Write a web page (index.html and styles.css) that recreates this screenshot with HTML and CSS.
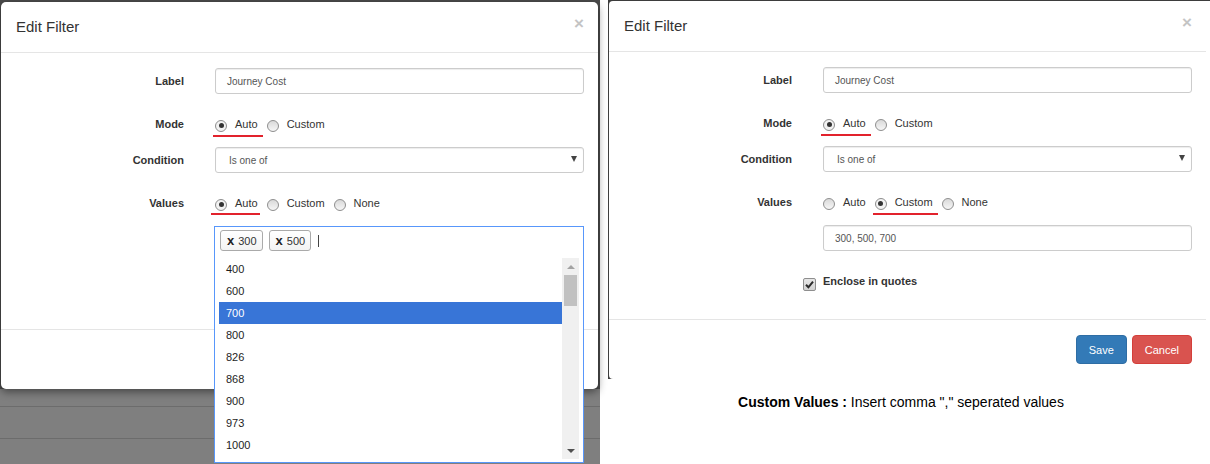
FILE: index.html
```html
<!DOCTYPE html>
<html lang="en">
<head>
<meta charset="UTF-8">
<title>Edit Filter</title>
<link rel="stylesheet" href="styles.css">
</head>
<body>

<div class="page">

    <!-- left shot: values = auto, dropdown open -->
    <div class="shot shot-left">
        <div class="modal">
            <div class="modal-header">
                <h4>Edit Filter</h4>
                <span class="close">&times;</span>
            </div>
            <div class="modal-body">
                <div class="form-row">
                    <label>Label</label>
                    <div class="input">Journey Cost</div>
                </div>
                <div class="form-row radios">
                    <label>Mode</label>
                    <div class="options">
                        <span class="opt marked"><i class="radio checked"></i>Auto</span>
                        <span class="opt"><i class="radio"></i>Custom</span>
                    </div>
                </div>
                <div class="form-row">
                    <label>Condition</label>
                    <div class="select">Is one of <span class="arrow"></span></div>
                </div>
                <div class="form-row radios">
                    <label>Values</label>
                    <div class="options">
                        <span class="opt marked wide"><i class="radio checked"></i>Auto</span>
                        <span class="opt"><i class="radio"></i>Custom</span>
                        <span class="opt"><i class="radio"></i>None</span>
                    </div>
                </div>
                <div class="form-row last">
                    <div class="tagbox offset">
                        <span class="tag"><b>x</b>300</span>
                        <span class="tag"><b>x</b>500</span>
                        <span class="cursor"></span>

                        <div class="results">
                            <ul>
                                <li>400</li>
                                <li>600</li>
                                <li class="hl">700</li>
                                <li>800</li>
                                <li>826</li>
                                <li>868</li>
                                <li>900</li>
                                <li>973</li>
                                <li>1000</li>
                            </ul>
                            <div class="scrollbar">
                                <span class="sb-btn up"></span>
                                <span class="sb-thumb"></span>
                                <span class="sb-track"></span>
                                <span class="sb-btn down"></span>
                            </div>
                        </div>
                    </div>
                </div>
            </div>
            <div class="modal-footer"></div>
        </div>
    </div>

    <!-- right shot: values = custom -->
    <div class="right-col">
        <div class="shot shot-right">
            <div class="modal">
                <div class="modal-header">
                    <h4>Edit Filter</h4>
                    <span class="close">&times;</span>
                </div>
                <div class="modal-body">
                    <div class="form-row">
                        <label>Label</label>
                        <div class="input">Journey Cost</div>
                    </div>
                    <div class="form-row radios">
                        <label>Mode</label>
                        <div class="options">
                            <span class="opt marked"><i class="radio checked"></i>Auto</span>
                            <span class="opt"><i class="radio"></i>Custom</span>
                        </div>
                    </div>
                    <div class="form-row">
                        <label>Condition</label>
                        <div class="select">Is one of <span class="arrow"></span></div>
                    </div>
                    <div class="form-row radios">
                        <label>Values</label>
                        <div class="options">
                            <span class="opt"><i class="radio"></i>Auto</span>
                            <span class="opt marked"><i class="radio checked"></i>Custom</span>
                            <span class="opt"><i class="radio"></i>None</span>
                        </div>
                    </div>
                    <div class="form-row">
                        <div class="input offset">300, 500, 700</div>
                    </div>
                    <div class="form-row radios">
                        <div class="check offset">
                            <span class="checkbox">
                                <svg width="9" height="9" viewBox="0 0 9 9"><path d="M1 4.8 L3.4 7.3 L8 1.6" fill="none" stroke="#2b2b2b" stroke-width="2"/></svg>
                            </span>
                            Enclose in quotes
                        </div>
                    </div>
                </div>
                <div class="modal-footer">
                    <button class="btn btn-primary">Save</button>
                    <button class="btn btn-danger">Cancel</button>
                </div>
            </div>
        </div>
        <p class="caption"><b>Custom Values :</b> Insert comma "," seperated values</p>
    </div>

</div>

</body>
</html>
```

FILE: styles.css
```css
body {
    margin: 0;
    font-family: "Liberation Sans", Arial, sans-serif;
    color: #333;
    background: #fff;
}
.page {
    display: flex;
    width: 1210px;
    height: 464px;
    overflow: hidden;
}

/* screenshots */
.shot-left {
    width: 600px;
    height: 464px;
    box-sizing: border-box;
    padding: 2px 0 0 1px;
    background:
        linear-gradient(#6c6c6c, #6c6c6c) 0 406px / 100% 1px no-repeat,
        linear-gradient(#6c6c6c, #6c6c6c) 0 438px / 100% 1px no-repeat,
        linear-gradient(#4b4b4b 389px, #7f7f7f 389px);
}
.right-col {
    margin-left: 8px;
    width: 602px;
}
.shot-right {
    border-top: 1px solid #3d3d3d;
    border-left: 1px solid #3d3d3d;
    background: linear-gradient(to right, #3d3d3d 6px, #fff 6px);
}

/* modal */
.modal {
    width: 597px;
    background: #fff;
    border-radius: 5px;
    position: relative;
}
.shot-left .modal {
    box-shadow: 0 3px 8px rgba(0, 0, 0, 0.45);
}
.shot-right .modal {
    border-radius: 4px 0 0 4px;
}
.modal-header {
    display: flex;
    justify-content: space-between;
    align-items: flex-start;
    padding: 15px 14px 15px 15px;
    border-bottom: 1px solid #e5e5e5;
}
.modal-header h4 {
    margin: 0;
    font-size: 15px;
    font-weight: normal;
    line-height: 20px;
    color: #333;
}
.close {
    font-size: 17px;
    font-weight: bold;
    line-height: 16px;
    margin-top: -1px;
    color: #c4c4c4;
}
.modal-body {
    padding: 15px 14px 15px 15px;
}
.modal-footer {
    display: flex;
    justify-content: flex-end;
    gap: 5px;
    height: 29px;
    padding: 15px 14px 15px 15px;
    border-top: 1px solid #e5e5e5;
}

/* form */
.form-row {
    display: grid;
    grid-template-columns: 168px 369px;
    column-gap: 31px;
    align-items: center;
    margin-bottom: 13px;
}
.form-row.last {
    margin-bottom: 56px;
}
.form-row label {
    text-align: right;
    font-size: 11px;
    font-weight: bold;
}
.form-row.radios {
    padding-top: 7px;
    line-height: 20px;
}
.offset {
    grid-column: 2;
}
.input,
.select {
    height: 26px;
    box-sizing: border-box;
    border: 1px solid #ccc;
    border-radius: 3px;
    box-shadow: inset 0 1px 1px rgba(0, 0, 0, 0.075);
    font-size: 10px;
    line-height: 25px;
    color: #555;
    padding: 0 11px;
}
.select {
    display: flex;
    justify-content: space-between;
    align-items: center;
    padding: 0 6px 0 13px;
}
.arrow {
    width: 0;
    height: 0;
    border-left: 3.5px solid transparent;
    border-right: 3.5px solid transparent;
    border-top: 6px solid #444;
    margin-top: -2px;
}

/* radios */
.options {
    display: flex;
    font-size: 11px;
}
.opt {
    display: inline-flex;
    align-items: center;
    position: relative;
    margin-right: 9px;
}
.radio {
    width: 12px;
    height: 12px;
    box-sizing: border-box;
    border: 1px solid #8e8e8e;
    border-radius: 50%;
    background: linear-gradient(#d9d9d9, #f6f6f6);
    margin: 3px 8px 0 0;
    position: relative;
}
.radio.checked {
    background: #f2f2f2;
}
.radio.checked::after {
    content: "";
    position: absolute;
    inset: 2.5px;
    border-radius: 50%;
    background: #333;
}
/* red marks drawn under the chosen option */
.opt.marked::after {
    content: "";
    position: absolute;
    left: -2px;
    right: -5px;
    bottom: -3px;
    height: 2px;
    background: #e2222c;
}
.opt.marked.wide::after {
    left: -4px;
    right: -2px;
    bottom: -2px;
}

/* checkbox */
.check {
    display: flex;
    align-items: center;
    font-size: 11px;
    font-weight: bold;
}
.checkbox {
    width: 13px;
    height: 13px;
    box-sizing: border-box;
    border: 1px solid #8e8e8e;
    border-radius: 2px;
    background: linear-gradient(#e6e6e6, #d2d2d2);
    margin: 6px 7px 0 -20px;
    display: flex;
    align-items: center;
    justify-content: center;
}

/* multi select */
.tagbox {
    position: relative;
    z-index: 2;
    display: flex;
    align-items: center;
    height: 31px;
    box-sizing: content-box;
    border: 1px solid #5897fb;
    border-bottom: 0;
    padding: 0 0 0 5px;
    margin-left: -1px;
    align-self: start;
}
.tag {
    display: inline-flex;
    align-items: center;
    height: 21px;
    box-sizing: border-box;
    border: 1px solid #aaa;
    border-radius: 3px;
    padding: 0 5px 0 6px;
    margin: -4px 6px 0 0;
    font-size: 11px;
    color: #333;
    background: linear-gradient(#fff, #f3f3f3);
}
.tag b {
    font-size: 13px;
    margin-right: 4px;
    color: #222;
}
.cursor {
    width: 1px;
    height: 12px;
    background: #444;
    margin: -4px 0 0 1px;
}
.results {
    position: absolute;
    top: 100%;
    left: -1px;
    right: -1px;
    display: flex;
    height: 201px;
    padding: 0 4px 3px 4px;
    background: #fff;
    border: 1px solid #5897fb;
    border-top: 0;
}
.results ul {
    flex: 1;
    margin: 0;
    padding: 0;
    list-style: none;
    overflow: hidden;
}
.results li {
    padding: 3px 7px;
    line-height: 16px;
    font-size: 11px;
    color: #1d1d1d;
}
.results li.hl {
    background: #3875d7;
    color: #fff;
}
.scrollbar {
    width: 17px;
    display: flex;
    flex-direction: column;
    align-items: center;
    background: #f0f0f0;
}
.sb-btn {
    height: 17px;
    width: 17px;
    display: flex;
    align-items: center;
    justify-content: center;
}
.sb-btn::after {
    content: "";
    border-left: 4px solid transparent;
    border-right: 4px solid transparent;
}
.sb-btn.up::after {
    border-bottom: 4px solid #a3a3a3;
}
.sb-btn.down::after {
    border-top: 4px solid #505050;
}
.sb-thumb {
    width: 13px;
    height: 31px;
    background: #c1c1c1;
}
.sb-track {
    flex: 1;
}

/* buttons */
.btn {
    height: 29px;
    padding: 0 12px;
    border: 1px solid transparent;
    border-radius: 4px;
    font-family: inherit;
    font-size: 11px;
    color: #fff;
}
.btn-primary {
    background: #337ab7;
    border-color: #2e6da4;
}
.btn-danger {
    background: #d9534f;
    border-color: #d43f3a;
}

.caption {
    margin: 14px 0 0;
    padding-right: 16px;
    text-align: center;
    font-size: 14px;
    line-height: 18px;
    color: #000;
}
```
